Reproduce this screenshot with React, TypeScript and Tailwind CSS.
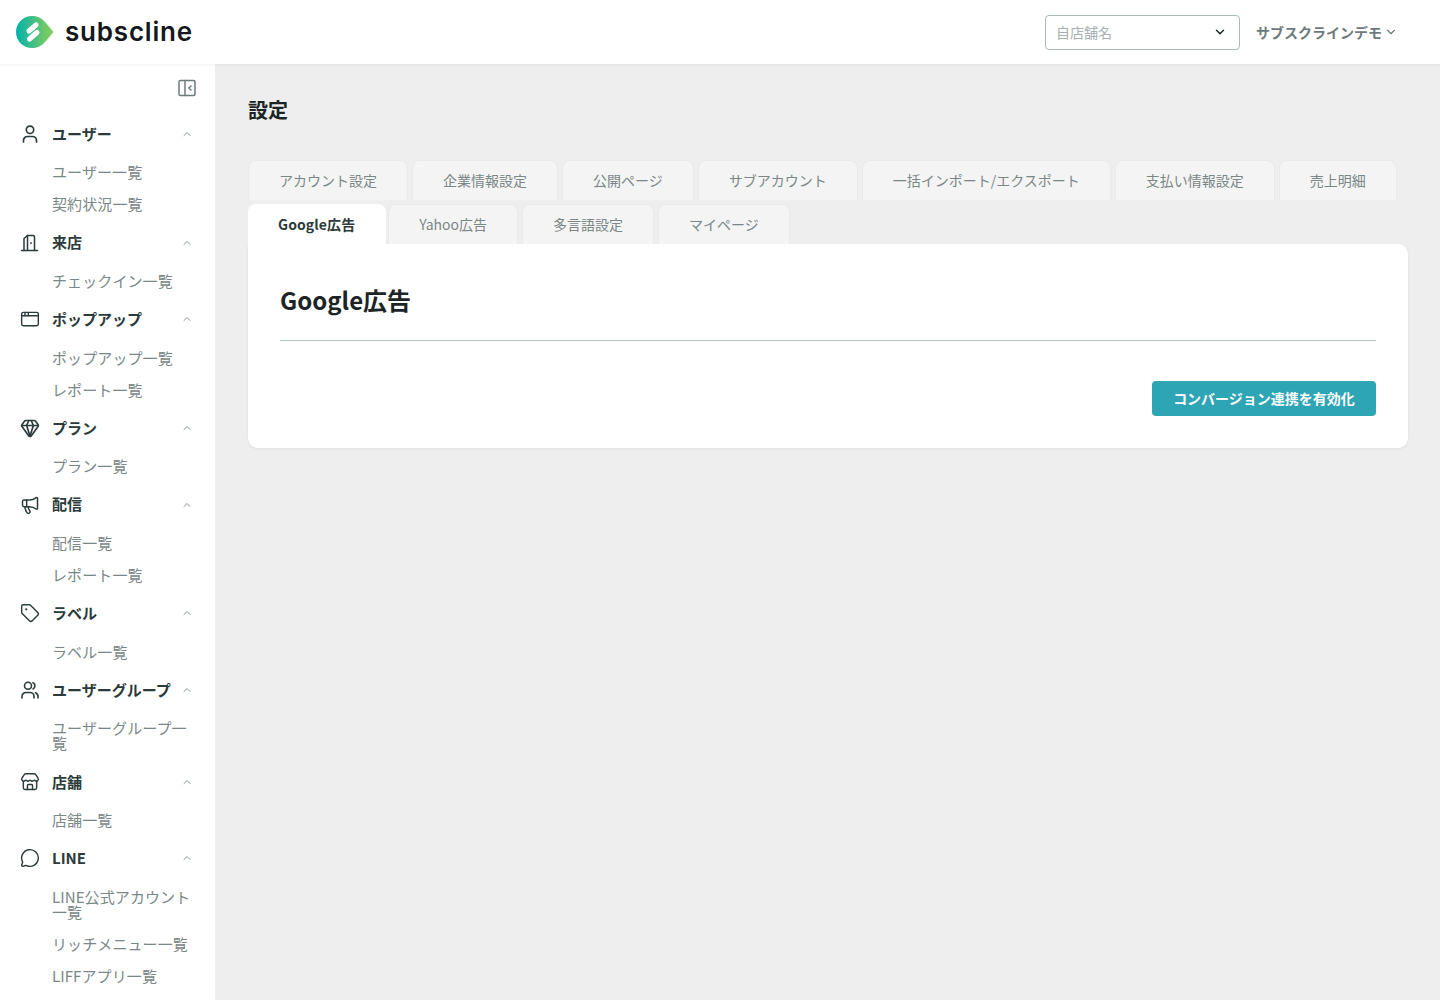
import { AppWindow, ChevronDown, ChevronUp, Gem, Megaphone, MessageCircle, Store, Tag } from "lucide-react";
import type { ReactNode } from "react";

function UserIcon() {
  return (
    <svg width="20" height="20" viewBox="0 0 20 20" fill="none" stroke="currentColor" strokeWidth="1.7" strokeLinecap="round" strokeLinejoin="round">
      <circle cx="10" cy="5.800" r="3.700" />
      <path d="M3.500 18v-1.500a4 4 0 0 1 4-4h5a4 4 0 0 1 4 4V18" />
    </svg>
  );
}

function DoorIcon() {
  return (
    <svg width="20" height="20" viewBox="0 0 20 20" fill="none" stroke="currentColor" strokeWidth="1.5" strokeLinecap="round" strokeLinejoin="round">
      <path d="M1.500 17.500h16" />
      <path d="M4 17.500V5.500L7.500 2.500h5.500a1.500 1.500 0 0 1 1.500 1.500v13.500" />
      <path d="M7.500 2.500v15" />
      <path d="M11 9.800v.8" />
    </svg>
  );
}

function UsersIcon() {
  return (
    <svg width="20" height="20" viewBox="0 0 20 20" fill="none" stroke="currentColor" strokeWidth="1.6" strokeLinecap="round" strokeLinejoin="round">
      <circle cx="8" cy="5.800" r="3.500" />
      <path d="M2 18v-1.500a4 4 0 0 1 4-4h4a4 4 0 0 1 4 4V18" />
      <path d="M13 2.700a3.500 3.500 0 0 1 0 6.300" />
      <path d="M18 18v-1.500a4 4 0 0 0-2.500-3.700" />
    </svg>
  );
}

const groups: { title: string; icon: ReactNode; items: string[] }[] = [
  { title: "ユーザー", icon: <UserIcon />, items: ["ユーザー一覧", "契約状況一覧"] },
  { title: "来店", icon: <DoorIcon />, items: ["チェックイン一覧"] },
  { title: "ポップアップ", icon: <AppWindow size={20} strokeWidth={1.7} />, items: ["ポップアップ一覧", "レポート一覧"] },
  { title: "プラン", icon: <Gem size={20} strokeWidth={2} />, items: ["プラン一覧"] },
  { title: "配信", icon: <Megaphone size={20} strokeWidth={1.8} />, items: ["配信一覧", "レポート一覧"] },
  { title: "ラベル", icon: <Tag size={20} strokeWidth={1.7} />, items: ["ラベル一覧"] },
  { title: "ユーザーグループ", icon: <UsersIcon />, items: ["ユーザーグループ一覧"] },
  { title: "店舗", icon: <Store size={20} strokeWidth={1.7} />, items: ["店舗一覧"] },
  { title: "LINE", icon: <MessageCircle size={20} strokeWidth={1.7} />, items: ["LINE公式アカウント一覧", "リッチメニュー一覧", "LIFFアプリ一覧"] },
];

const tabs = ["アカウント設定", "企業情報設定", "公開ページ", "サブアカウント", "一括インポート/エクスポート", "支払い情報設定", "売上明細", "Google広告", "Yahoo広告", "多言語設定", "マイページ"];

function Logo() {
  return (
    <svg width="38" height="32" viewBox="0 0 38 32">
      <defs>
        <linearGradient id="lg" x1="0" y1="0" x2="1" y2="0">
          <stop offset="0" stopColor="#05b2ad" />
          <stop offset="1" stopColor="#8ccf55" />
        </linearGradient>
      </defs>
      <path d="M16 0c6 0 10 2.500 14 7l7.500 9-7.500 9c-4 4.500-8 7-14 7C7 32 0 25 0 16S7 0 16 0z" fill="url(#lg)" />
      <path d="M20 9l-7 6M21 16.500l-7.500 6.500" stroke="#fff" strokeWidth="5" strokeLinecap="round" fill="none" />
    </svg>
  );
}

export default function App() {
  return (
    <div className="h-screen overflow-hidden flex flex-col bg-[#eeeeee] text-[#2b3a3a] font-['Noto_Sans_CJK_JP','Noto_Sans',sans-serif]">
      <header className="relative z-10 h-16 shrink-0 bg-white shadow-[0_1px_3px_rgba(0,0,0,0.06)] flex items-center pl-4 pr-[42px]">
        <Logo />
        <span className="ml-[11px] pb-px text-[26px] leading-none font-semibold tracking-[0.8px] text-[#16191b] font-['Inter',sans-serif]">subscline</span>
        <div className="ml-auto w-[195px] h-[35px] rounded border border-[#a9b8b8] flex items-center pl-2.5 pr-3 pb-px text-sm text-[#a5b1b1]">
          自店舗名
          <ChevronDown size={14} strokeWidth={2.5} className="ml-auto text-[#1c2526]" />
        </div>
        <div className="ml-4 pb-px flex items-center gap-[2px] text-sm font-bold text-[#6d7a7b]">
          サブスクラインデモ
          <ChevronDown size={14} strokeWidth={2} />
        </div>
      </header>
      <div className="flex flex-1 min-h-0">
        <aside className="w-[215px] shrink-0 bg-white overflow-hidden px-[21px] pt-[14px]">
          <div className="flex justify-end -mr-[3px] h-[33.6px] text-[#6d7a7b]">
            <svg width="20" height="20" viewBox="0 0 20 20" fill="none" stroke="currentColor" strokeWidth="1.5" strokeLinecap="round" strokeLinejoin="round">
              <rect x="2" y="2.500" width="16" height="15" rx="1.500" />
              <path d="M8 2.500v15" />
              <path d="M14 8l-2.200 2 2.200 2" />
            </svg>
          </div>
          {groups.map((g) => (
            <div key={g.title}>
              <div className="h-[44.7px] flex items-center">
                <span className="w-[32px] -ml-px shrink-0 text-[#2b3a3a]">{g.icon}</span>
                <span className="text-[15px] font-bold">{g.title}</span>
                <ChevronUp size={12} className="ml-auto mr-px text-[#8a9595]" />
              </div>
              {g.items.map((item, i) => (
                <div key={i} className="pl-[31px] pt-[8px] pb-[9px] text-[15px] leading-[15px] tracking-[0.1px] text-[#7a8787]">{item}</div>
              ))}
            </div>
          ))}
        </aside>
        <main className="flex-1 pr-[32px] pl-[33px]">
          <h1 className="mt-[32px] text-[20px] leading-[28px] font-bold text-[#1c2526]">設定</h1>
          <div className="mt-[36px] flex flex-wrap gap-1">
            {tabs.map((t) => (
              <div
                key={t}
                className={
                  t === "Google広告"
                    ? "h-10 pl-[30px] pr-[31px] -mr-[2px] pb-px flex items-center rounded-t-lg bg-white text-sm font-bold tracking-[0.1px] text-[#2b3a3a]"
                    : "h-10 px-[30px] pb-px flex items-center rounded-t-lg bg-[#f4f4f4] border border-b-0 border-[#eaeaea] text-sm text-[#7a8787]"
                }
              >
                {t}
              </div>
            ))}
          </div>
          <section className="bg-white rounded-b-[10px] rounded-tr-[10px] px-8 shadow-[0_1px_3px_rgba(0,0,0,0.06)]">
            <h2 className="pt-[37px] text-2xl leading-[38px] font-bold text-[#1c2526] pb-[21px] border-b border-[#b5c5c3]">Google広告</h2>
            <div className="flex justify-end pt-10 pb-8">
              <button className="w-[224px] h-[35px] pb-px rounded bg-[#2ea5b5] text-sm font-bold text-white">コンバージョン連携を有効化</button>
            </div>
          </section>
        </main>
      </div>
    </div>
  );
}
